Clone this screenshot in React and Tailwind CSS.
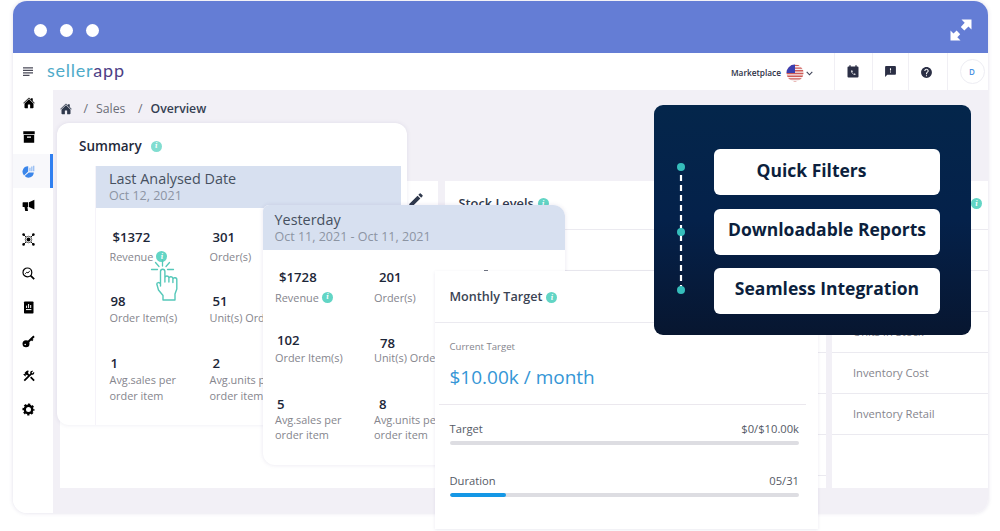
import React from "react";
import { MdFeedback, MdHelp, MdConstruction, MdEdit } from "react-icons/md";
import { IoHome } from "react-icons/io5";

function Info({ className = "" }) {
  return (
    <span
      className={
        "inline-flex h-[11px] w-[11px] shrink-0 items-center justify-center rounded-full bg-[#62d5c5] font-serif text-[8px] leading-none font-bold text-white italic " +
        className
      }
    >
      i
    </span>
  );
}

function ArchiveIcon() {
  return (
    <svg width="12" height="12" viewBox="0 0 12 12" fill="currentColor">
      <path d="M0.3 0.3h11.4v3H0.3zM0.8 4h10.4v7.7H0.8zM4 5.400v1.400h4V5.400z" fillRule="evenodd" />
    </svg>
  );
}

function PieIcon() {
  return (
    <svg width="13" height="13" viewBox="0 0 13 13" fill="currentColor">
      <path d="M6.200 1.300A5.400 5.400 0 0 0 2 10.400L6.200 6.600z" />
      <path d="M2.700 11.100A5.400 5.400 0 0 0 11.800 7.400H6.800z" />
      <path d="M7.400 6.300V2.800h1.100v3.500zM9.300 6.300V1.600h1.100v4.700zM11.200 6.300V.8h1.100v5.500z" opacity=".6" />
    </svg>
  );
}

function MegaphoneIcon() {
  return (
    <svg width="13" height="13" viewBox="0 0 13 13" fill="currentColor">
      <path d="M12.400 .8v9.600L7 7.900V3.300z" />
      <path d="M.6 3.700Q.6 3.200 1.200 3.200H6.200V8H5.400L6 12H3.200L2.500 8H1.200Q.6 8 .6 7.400z" />
    </svg>
  );
}

function HubIcon() {
  return (
    <svg width="13" height="13" viewBox="0 0 13 13" fill="currentColor">
      <path d="M1.500 1.500l10 10M11.500 1.500l-10 10" stroke="currentColor" strokeWidth=".9" />
      <circle cx="6.500" cy="6.500" r="3.300" fill="#fff" stroke="currentColor" strokeWidth=".6" />
      <circle cx="6.500" cy="6.500" r="2" />
      <circle cx="1.600" cy="1.600" r="1.300" />
      <circle cx="11.400" cy="1.600" r="1.300" />
      <circle cx="1.600" cy="11.400" r="1.300" />
      <circle cx="11.400" cy="11.400" r="1.300" />
    </svg>
  );
}

function SearchChartIcon() {
  return (
    <svg width="13" height="13" viewBox="0 0 13 13" fill="none" stroke="currentColor">
      <circle cx="5.400" cy="5.400" r="4.400" strokeWidth="1.200" />
      <path d="M8.600 8.600l3.600 3.600" strokeWidth="1.700" />
      <path d="M3.200 6.800L4.800 5.200L6 6L7.800 3.800" strokeWidth=".9" />
    </svg>
  );
}

function ReportIcon() {
  return (
    <svg width="11" height="13" viewBox="0 0 11 13">
      <rect x="1" y="0.5" width="9.500" height="12" rx=".8" fill="currentColor" />
      <path d="M3.600 7V4.600M5.600 7V3M7.700 7V4M3 8.600h5.400" stroke="#fff" strokeWidth="1" />
    </svg>
  );
}

function KeyIcon() {
  return (
    <svg width="13" height="13" viewBox="0 0 13 13">
      <path d="M5 8L12 1.200M8.800 3.800l2 1.800" stroke="currentColor" strokeWidth="2" fill="none" />
      <circle cx="4" cy="8.700" r="3.500" fill="currentColor" />
      <circle cx="3.200" cy="9.500" r=".8" fill="#fff" />
    </svg>
  );
}

function GearIcon() {
  return (
    <svg width="13" height="13" viewBox="-6.500 -6.500 13 13" fill="none" stroke="currentColor">
      <circle r="3.700" strokeWidth="2.400" />
      <circle r="5.200" strokeWidth="1.700" strokeDasharray="2.200 1.884" strokeDashoffset="1.100" />
    </svg>
  );
}

function MenuIcon() {
  return (
    <svg width="10" height="9" viewBox="0 0 10 9" stroke="#4a4a58" strokeWidth="1.200">
      <path d="M0 .9h10M0 3.400h10M0 5.900h10M0 8.300h6.500" />
    </svg>
  );
}

function CalendarPhoneIcon() {
  return (
    <svg width="12" height="13" viewBox="0 0 12 13">
      <path d="M1.500 1.500h9a1 1 0 0 1 1 1v9a1 1 0 0 1-1 1h-9a1 1 0 0 1-1-1v-9a1 1 0 0 1 1-1z" fill="currentColor" />
      <path d="M3 .3v2M9 .3v2" stroke="currentColor" strokeWidth="1.300" />
      <path d="M4 5.600c.2 2.600 1.800 4.200 4.400 4.400V8.700l-1.200-.3-.7.600c-.6-.4-1.100-.9-1.400-1.500l.6-.7-.3-1.200z" fill="#fff" />
    </svg>
  );
}

function ExpandIcon() {
  return (
    <svg width="22" height="22" viewBox="0 0 22 22" fill="#fff">
      <path d="M11.500 .5H21.500V10.500L18.500 7.500L14.300 11.500L10.800 8L14.700 3.700z" />
      <path d="M10.500 21.500H.5V11.500L3.500 14.500L6.600 11.600L10.200 15.200L7.300 18.300z" />
    </svg>
  );
}

function FlagIcon() {
  return (
    <svg width="18" height="18" viewBox="0 0 18 18">
      <defs>
        <clipPath id="flag-disc">
          <circle cx="9" cy="9" r="8.500" />
        </clipPath>
      </defs>
      <g clipPath="url(#flag-disc)">
        <rect width="18" height="18" fill="#f6ecec" />
        <path
          d="M0 1.400h18M0 4.100h18M0 6.800h18M0 9.500h18M0 12.200h18M0 14.900h18M0 17.600h18"
          stroke="#cf5b57"
          strokeWidth="1.400"
        />
        <rect width="9" height="9" fill="#3c3fb0" />
      </g>
    </svg>
  );
}

function TapIcon() {
  return (
    <svg width="32" height="46" viewBox="0 0 32 46" fill="none" stroke="#55c8b9" strokeLinecap="round" strokeLinejoin="round">
      <path d="M12.500 5v6M5.500 7.500l3.500 4M19.500 7.500l-3.500 4M1.500 14.500h6M17.500 14.500h6" strokeWidth="1.300" />
      <path
        d="M10.500 30V16.500a2.200 2.200 0 0 1 4.400 0V27M14.900 22.500a2.100 2.100 0 0 1 4 0V27M18.900 23a2.100 2.100 0 0 1 4 .5V27.500M22.900 24.500a1.900 1.900 0 0 1 3.900.5V34l-1.800 5v6H13v-4.500L8.500 35l-1.700-6c.2-1.800 2.500-2 3.700 0V31"
        strokeWidth="1.400"
        fill="#fff"
      />
    </svg>
  );
}

const NAV = [
  { id: "home", icon: <IoHome size={12} /> },
  { id: "archive", icon: <ArchiveIcon /> },
  { id: "sales", icon: <PieIcon />, active: true },
  { id: "ads", icon: <MegaphoneIcon /> },
  { id: "hub", icon: <HubIcon /> },
  { id: "research", icon: <SearchChartIcon /> },
  { id: "report", icon: <ReportIcon /> },
  { id: "key", icon: <KeyIcon /> },
  { id: "tools", icon: <MdConstruction size={14} /> },
  { id: "settings", icon: <GearIcon /> },
];

function Sidebar() {
  return (
    <nav className="flex w-10 shrink-0 flex-col bg-white text-black">
      <div className="flex h-[33px] items-center pt-[4px] pl-[10px]">
        <MenuIcon />
      </div>
      {NAV.map((n) => (
        <div
          key={n.id}
          className={
            "flex h-[34.1px] items-center border-r-[3px] " +
            (n.active ? "border-[#2f7ff0] bg-[#f8f8fb] text-[#3b86ea]" : "border-transparent")
          }
        >
          <span className="flex w-[31px] justify-center">{n.icon}</span>
        </div>
      ))}
    </nav>
  );
}

function Header() {
  return (
    <header className="flex h-[37px] shrink-0 items-stretch bg-white text-[#2b2f45]">
      <div className="-mt-[3px] -ml-[6px] flex items-center font-[Lato] text-[18px] leading-none tracking-[0.75px]">
        <span className="text-[#4fabc9]">seller</span>
        <span className="text-[#4e3f86]">app</span>
      </div>
      <div className="ml-auto flex items-center pt-[3px] pr-[21px]">
        <span className="text-[8.300px] font-semibold">Marketplace</span>
        <span className="ml-[5px]">
          <FlagIcon />
        </span>
        <svg className="ml-[2px]" width="7" height="5" viewBox="0 0 7 5" fill="none" stroke="#3c4055" strokeWidth="1.100">
          <path d="M.7 .9L3.500 3.800L6.300 .9" />
        </svg>
      </div>
      <div className="flex w-[38px] items-center justify-center border-l border-[#f0eff4] pr-px">
        <CalendarPhoneIcon />
      </div>
      <div className="flex w-[36px] items-center justify-center border-l border-[#f0eff4]">
        <MdFeedback size={13} />
      </div>
      <div className="flex w-[39px] items-center justify-center border-l border-[#f0eff4] pt-[2px] pr-[4px]">
        <MdHelp size={13} />
      </div>
      <div className="flex w-[41px] items-center justify-center border-l border-[#f0eff4] pl-2">
        <span className="flex h-[25px] w-[25px] items-center justify-center rounded-full border border-[#ededf3] text-[8px] font-semibold text-[#4a90e2]">
          D
        </span>
      </div>
    </header>
  );
}

function Breadcrumb() {
  return (
    <div className="flex h-[38px] items-center pt-px pl-[7px] text-[12.300px] text-[#6b6e78]">
      <IoHome size={12} className="-mt-[2px] text-[#2f394c]" />
      <span className="ml-[11.500px]">/</span>
      <span className="ml-[8px]">Sales</span>
      <span className="ml-[12.500px]">/</span>
      <span className="ml-[8px] font-semibold text-[#353f52]">Overview</span>
    </div>
  );
}

function Row({ children }) {
  return (
    <div className="flex h-[41px] items-center border-b border-[#ebeaf0] pl-[21px] text-[11.200px] text-[#85858d]">
      {children}
    </div>
  );
}

function Panels() {
  return (
    <div className="mt-[53px] flex h-[307px] pl-[7px] text-[#2f394c]">
      <section className="w-[378px] bg-white pt-[10px] pl-[347px]">
        <MdEdit size={18} />
      </section>
      <section className="ml-[7px] w-[381px] bg-white">
        <div className="flex h-[49px] items-center gap-[4px] border-b border-[#ebeaf0] pb-[3px] pl-[13.500px] text-[12.800px] font-semibold">
          Stock Levels <Info />
        </div>
        <Row />
        <Row />
        <Row />
        <Row />
        <Row />
        <Row />
      </section>
      <section className="ml-[6px] w-[156px] bg-white">
        <div className="flex h-[49px] items-center justify-end border-b border-[#ebeaf0] pr-[6px] pb-[3px]">
          <Info />
        </div>
        <Row />
        <Row />
        <Row>Units in Stock</Row>
        <Row>Inventory Cost</Row>
        <Row>Inventory Retail</Row>
      </section>
    </div>
  );
}

function Stat({ value, label, indent, raise, info }) {
  return (
    <div className="w-[99px] shrink-0 whitespace-nowrap">
      <div className={"h-4 text-[13.200px] leading-[15px] font-semibold text-[#1c2638] " + indent + " " + raise}>{value}</div>
      <div className="flex items-center text-[10.900px] leading-[15.600px] text-[#85858d]">
        <span className="whitespace-pre-line">{label}</span>
        {info ? <Info className="ml-[3px]" /> : null}
      </div>
    </div>
  );
}

function SummaryCard() {
  return (
    <section className="absolute top-[123px] left-[57px] h-[302px] w-[350px] rounded-xl bg-white shadow-[0_0_4px_rgba(90,80,140,0.12)]">
      <div className="flex h-[43px] items-center gap-[9px] pt-[3px] pl-[22px] text-[13.500px] font-semibold text-[#1f2a3c]">
        Summary <Info className="opacity-80" />
      </div>
      <div className="ml-[38px] h-[259px] w-[306px] border-l border-[#f5f3f9]">
        <div className="h-[42px] bg-[#d7e0f0] pt-[4px] pl-[13px] whitespace-nowrap">
          <div className="text-[14.400px] leading-[17px] text-[#46505f]">Last Analysed Date</div>
          <div className="text-[12.500px] leading-[17px] text-[#8c94a3]">Oct 12, 2021</div>
        </div>
        <div className="pl-[13.500px]">
          <div className="flex gap-px pt-[22px]">
            <Stat value="$1372" label="Revenue" indent="pl-[3px]" raise="mb-[3px]" info />
            <Stat value="301" label="Order(s)" indent="pl-[3px]" raise="mb-[3px]" />
          </div>
          <div className="flex gap-px pt-[29px]">
            <Stat value="98" label="Order Item(s)" indent="pl-px" raise="" />
            <Stat value="51" label="Unit(s) Ordered" indent="pl-[3px]" raise="" />
          </div>
          <div className="flex gap-px pt-[31px]">
            <Stat value="1" label={"Avg.sales per\norder item"} indent="pl-px" raise="" />
            <Stat value="2" label={"Avg.units per\norder item"} indent="pl-[3px]" raise="" />
          </div>
        </div>
      </div>
      <div className="absolute top-[132px] left-[93px]">
        <TapIcon />
      </div>
    </section>
  );
}

function YesterdayCard() {
  return (
    <section className="absolute top-[205px] left-[263px] h-[260px] w-[302px] overflow-hidden rounded-tl-md rounded-tr-xl rounded-bl-xl bg-white shadow-[0_0_4px_rgba(90,80,140,0.14)]">
      <div className="h-[45px] bg-[#d7e0f0] pt-[6px] pl-[11.500px] whitespace-nowrap">
        <div className="text-[14.400px] leading-[17px] text-[#46505f]">Yesterday</div>
        <div className="text-[12.500px] leading-[17px] text-[#8c94a3]">Oct 11, 2021 - Oct 11, 2021</div>
      </div>
      <div className="pl-[12px]">
        <div className="flex pt-[19.500px]">
          <Stat value="$1728" label="Revenue" indent="pl-[4px]" raise="mb-[4px]" info />
          <Stat value="201" label="Order(s)" indent="pl-[5px]" raise="mb-[4px]" />
        </div>
        <div className="flex items-end pt-[28px]">
          <Stat value="102" label="Order Item(s)" indent="pl-[2px]" raise="mb-px" />
          <Stat value="78" label="Unit(s) Ordered" indent="pl-[6px]" raise="-mb-[2px]" />
        </div>
        <div className="flex pt-[31px]">
          <Stat value="5" label={"Avg.sales per\norder item"} indent="pl-[2px]" raise="-mb-px" />
          <Stat value="8" label={"Avg.units per\norder item"} indent="pl-[5px]" raise="-mb-px" />
        </div>
      </div>
    </section>
  );
}

function Progress({ label, value, percent }) {
  return (
    <div className="mr-[19px] ml-[14.500px] text-[11.200px] leading-4 text-[#555a66]">
      <div className="flex justify-between">
        <span>{label}</span>
        <span>{value}</span>
      </div>
      <div className="mt-[4px] h-[4px] overflow-hidden rounded-xs bg-[#dddde2]">
        <div className="h-full rounded-xs bg-[#1597e5]" style={{ width: percent + "%" }} />
      </div>
    </div>
  );
}

function MonthlyTargetCard() {
  return (
    <section className="absolute top-[271px] left-[435px] h-[258px] w-[383px] bg-white shadow-[0_1px_3px_rgba(90,80,140,0.12)]">
      <span className="absolute top-[-1px] left-[49px] h-px w-[4px] bg-[#6d7280]" />
      <div className="flex h-[52px] items-center gap-[4px] border-b border-[#ebeaf0] pt-[2px] pl-[14.500px] text-[12.600px] font-semibold text-[#3b4454]">
        Monthly Target <Info />
      </div>
      <div className="mr-[12px] ml-[4px] h-[82px] border-b border-[#ebe8ee] pt-[16px] pl-[10.500px] whitespace-nowrap">
        <div className="text-[9.600px] leading-4 text-[#85858d]">Current Target</div>
        <div className="mt-[8px] text-[19px] leading-[28px] text-[#3596d6]">$10.00k / month</div>
      </div>
      <div className="flex flex-col gap-[28px] pt-[16px]">
        <Progress label="Target" value="$0/$10.00k" percent={0} />
        <Progress label="Duration" value="05/31" percent={16.1} />
      </div>
    </section>
  );
}

function FeatureCard() {
  const box = "flex h-[46px] w-[226px] justify-center rounded-md bg-white leading-6 ";
  return (
    <section className="absolute top-[105px] left-[654px] flex h-[230px] w-[317px] rounded-[9px] bg-linear-to-b from-[#04264b] via-[#04214a] to-[#071630]">
      <svg className="ml-[22px] shrink-0" width="10" height="230" viewBox="0 0 10 230">
        <path d="M5 70V182" stroke="#fff" strokeWidth="2.200" strokeDasharray="6 4" />
        <g fill="#35bdbb">
          <circle cx="5" cy="62" r="4" />
          <circle cx="5" cy="127" r="4" />
          <circle cx="5" cy="185" r="4" />
        </g>
      </svg>
      <div className="ml-[28px] flex flex-col gap-[13.500px] pt-[44px] text-[17.500px] font-bold whitespace-nowrap text-[#0c1f3d]">
        <div className={box + "pt-[9px] pr-[31px]"}>Quick Filters</div>
        <div className={box + "pt-[8px]"}>Downloadable Reports</div>
        <div className={box + "pt-[8px]"}>Seamless Integration</div>
      </div>
    </section>
  );
}

export default function App() {
  return (
    <main className="relative h-[531px] w-[1000px] overflow-hidden bg-white pt-px pl-[13px] font-['Open_Sans','Noto_Sans',sans-serif]">
      <div className="flex h-[512px] w-[975px] flex-col overflow-hidden rounded-[14px] bg-white shadow-[0_0_4px_rgba(90,80,140,0.18)]">
        <div className="flex h-[52px] shrink-0 items-center bg-[#647dd5] pt-[6px] pr-[16px] pl-[21px]">
          <div className="flex gap-[13px]">
            <span className="h-[13px] w-[13px] rounded-full bg-white" />
            <span className="h-[13px] w-[13px] rounded-full bg-white" />
            <span className="h-[13px] w-[13px] rounded-full bg-white" />
          </div>
          <span className="ml-auto">
            <ExpandIcon />
          </span>
        </div>
        <div className="flex min-h-0 flex-1">
          <Sidebar />
          <div className="flex min-w-0 flex-1 flex-col bg-[#f2f0f6]">
            <Header />
            <Breadcrumb />
            <Panels />
          </div>
        </div>
      </div>
      <SummaryCard />
      <YesterdayCard />
      <MonthlyTargetCard />
      <FeatureCard />
    </main>
  );
}
